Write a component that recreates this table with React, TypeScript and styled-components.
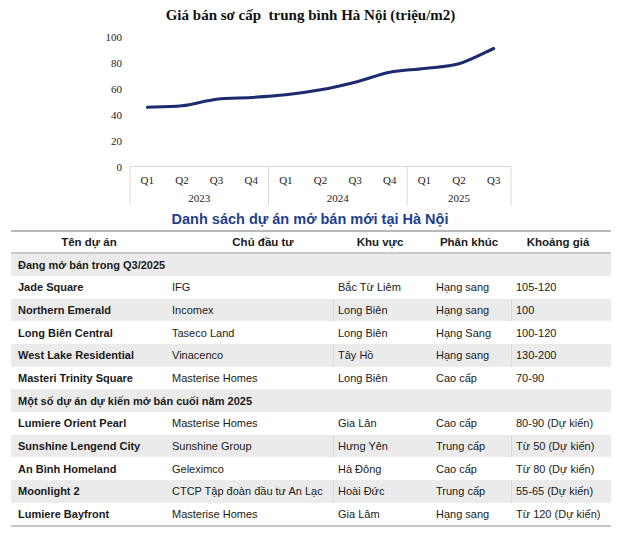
import React from 'react'
import styled, { createGlobalStyle } from 'styled-components'

interface Project {
  name: string
  investor: string
  area: string
  segment: string
  price: string
}

type Row = { kind: 'section'; title: string } | { kind: 'project'; data: Project }

const rows: Row[] = [
  { kind: 'section', title: 'Đang mở bán trong Q3/2025' },
  { kind: 'project', data: { name: 'Jade Square', investor: 'IFG', area: 'Bắc Từ Liêm', segment: 'Hạng sang', price: '105-120' } },
  { kind: 'project', data: { name: 'Northern Emerald', investor: 'Incomex', area: 'Long Biên', segment: 'Hạng sang', price: '100' } },
  { kind: 'project', data: { name: 'Long Biên Central', investor: 'Taseco Land', area: 'Long Biên', segment: 'Hạng Sang', price: '100-120' } },
  { kind: 'project', data: { name: 'West Lake Residential', investor: 'Vinacenco', area: 'Tây Hồ', segment: 'Hạng sang', price: '130-200' } },
  { kind: 'project', data: { name: 'Masteri Trinity Square', investor: 'Masterise Homes', area: 'Long Biên', segment: 'Cao cấp', price: '70-90' } },
  { kind: 'section', title: 'Một số dự án dự kiến mở bán cuối năm 2025' },
  { kind: 'project', data: { name: 'Lumiere Orient Pearl', investor: 'Masterise Homes', area: 'Gia Lân', segment: 'Cao cấp', price: '80-90 (Dự kiến)' } },
  { kind: 'project', data: { name: 'Sunshine Lengend City', investor: 'Sunshine Group', area: 'Hưng Yên', segment: 'Trung cấp', price: 'Từ 50 (Dự kiến)' } },
  { kind: 'project', data: { name: 'An Bình Homeland', investor: 'Geleximco', area: 'Hà Đông', segment: 'Cao cấp', price: 'Từ 80 (Dự kiến)' } },
  { kind: 'project', data: { name: 'Moonlight 2', investor: 'CTCP Tập đoàn đầu tư An Lạc', area: 'Hoài Đức', segment: 'Trung cấp', price: '55-65 (Dự kiến)' } },
  { kind: 'project', data: { name: 'Lumiere Bayfront', investor: 'Masterise Homes', area: 'Gia Lâm', segment: 'Hạng sang', price: 'Từ 120 (Dự kiến)' } },
]

// giá trung bình theo quý, Q1/2023 -> Q3/2025
const prices = [45.7, 46.8, 51.9, 53.2, 55.3, 59.1, 65.0, 72.7, 75.6, 79.2, 91.0]
const years = [
  { label: '2023', count: 4 },
  { label: '2024', count: 4 },
  { label: '2025', count: 3 },
]

const PLOT_LEFT = 130
const PLOT_RIGHT = 511
const BASE_Y = 166.5
const UNIT = 1.297
const STEP = (PLOT_RIGHT - PLOT_LEFT) / prices.length

const px = (i: number) => PLOT_LEFT + STEP * (i + 0.5)
const py = (v: number) => BASE_Y - v * UNIT

const smoothPath = (pts: [number, number][]) => {
  let d = `M${pts[0][0]},${pts[0][1]}`
  for (let i = 0; i < pts.length - 1; i++) {
    const p0 = pts[i - 1] || pts[i]
    const p1 = pts[i]
    const p2 = pts[i + 1]
    const p3 = pts[i + 2] || p2
    const t = 6
    const c1x = p1[0] + (p2[0] - p0[0]) / t
    const c1y = p1[1] + (p2[1] - p0[1]) / t
    const c2x = p2[0] - (p3[0] - p1[0]) / t
    const c2y = p2[1] - (p3[1] - p1[1]) / t
    d += ` C${c1x.toFixed(1)},${c1y.toFixed(1)} ${c2x.toFixed(1)},${c2y.toFixed(1)} ${p2[0].toFixed(1)},${p2[1].toFixed(1)}`
  }
  return d
}

const PriceChart: React.FC = () => {
  const pts = prices.map((v, i) => [px(i), py(v)] as [number, number])
  let start = 0
  const groupLines = [PLOT_LEFT]
  return (
    <ChartSvg width={629} height={182} viewBox="0 26 629 182">
      {[0, 20, 40, 60, 80, 100].map(v => (
        <AxisText key={v} x={122} y={py(v) + 4} textAnchor="end">
          {v}
        </AxisText>
      ))}
      <line x1={PLOT_LEFT} y1={BASE_Y} x2={PLOT_RIGHT} y2={BASE_Y} stroke="#d9d9d9" strokeWidth={1} />
      {years.map(y => {
        const from = start
        start += y.count
        groupLines.push(PLOT_LEFT + STEP * start)
        return (
          <AxisText key={y.label} x={PLOT_LEFT + STEP * (from + y.count / 2)} y={201.5} textAnchor="middle">
            {y.label}
          </AxisText>
        )
      })}
      {groupLines.map(x => (
        <line key={x} x1={x} y1={BASE_Y} x2={x} y2={206} stroke="#d9d9d9" strokeWidth={1} />
      ))}
      {prices.map((_, i) => (
        <AxisText key={i} x={px(i)} y={183.5} textAnchor="middle">
          {`Q${(i % 4) + 1}`}
        </AxisText>
      ))}
      <path d={smoothPath(pts)} fill="none" stroke="#1c2b6e" strokeWidth={3} strokeLinecap="round" />
    </ChartSvg>
  )
}

const App: React.FC = () => {
  let shade = false
  return (
    <Page>
      <GlobalStyle />
      <ChartTitle>{'Giá bán sơ cấp  trung bình Hà Nội (triệu/m2)'}</ChartTitle>
      <PriceChart />
      <TableTitle>Danh sách dự án mở bán mới tại Hà Nội</TableTitle>
      <Table>
        <HeaderRow>
          <HeadCell>Tên dự án</HeadCell>
          <HeadCell $shift={26}>Chủ đầu tư</HeadCell>
          <HeadCell>Khu vực</HeadCell>
          <HeadCell>Phân khúc</HeadCell>
          <HeadCell $shift={-6}>Khoảng giá</HeadCell>
        </HeaderRow>
        {rows.map((row, i) => {
          shade = !shade
          if (row.kind === 'section') {
            return (
              <SectionRow key={i} $shade={shade}>
                {row.title}
              </SectionRow>
            )
          }
          const p = row.data
          return (
            <DataRow key={i} $shade={shade}>
              <NameCell>{p.name}</NameCell>
              <Cell>{p.investor}</Cell>
              <Cell $divider={shade}>{p.area}</Cell>
              <Cell $pad={8}>{p.segment}</Cell>
              <Cell $divider={shade}>{p.price}</Cell>
            </DataRow>
          )
        })}
      </Table>
    </Page>
  )
}

export default App

const GlobalStyle = createGlobalStyle`
  body {
    margin: 0;
    background: #ffffff;
  }
`

const Page = styled.div`
  width: 629px;
  height: 540px;
  background: #ffffff;
  display: flex;
  flex-direction: column;
  overflow: hidden;
`

const ChartTitle = styled.div`
  font-family: 'Liberation Serif', 'Times New Roman', serif;
  font-weight: bold;
  font-size: 15px;
  color: #111111;
  text-align: center;
  white-space: pre;
  padding: 7px 8px 0 0;
  height: 19px;
  line-height: 16px;
`

const ChartSvg = styled.svg`
  display: block;
`

const AxisText = styled.text`
  font-family: 'Liberation Serif', 'Times New Roman', serif;
  font-size: 11px;
  fill: #222222;
`

const TableTitle = styled.div`
  font-family: 'Liberation Sans', Arial, sans-serif;
  font-weight: bold;
  font-size: 14.5px;
  color: #23408e;
  text-align: center;
  line-height: 18px;
  height: 22px;
  padding: 2px 9px 0 0;
  box-sizing: border-box;
`

const Table = styled.div`
  margin-left: 11px;
  width: 600px;
  border-top: 2px solid #b8b8b8;
  border-bottom: 2px solid #c4c4c4;
  font-family: 'Liberation Sans', Arial, sans-serif;
  font-size: 11px;
  color: #1a1a1a;
`

const columns = '156px 166px 94px 84px 100px'

const HeaderRow = styled.div`
  display: grid;
  grid-template-columns: ${columns};
  height: 19.5px;
  align-items: center;
  border-bottom: 2px solid #c8c8c8;
  background: #ffffff;
`

const HeadCell = styled.div<{ $shift?: number }>`
  font-weight: bold;
  font-size: 11.5px;
  text-align: center;
  padding-left: ${p => Math.max(p.$shift || 0, 0)}px;
  padding-right: ${p => Math.max(-(p.$shift || 0), 0)}px;
`

const SectionRow = styled.div<{ $shade: boolean }>`
  height: 22.65px;
  display: flex;
  align-items: center;
  padding-left: 7px;
  font-weight: bold;
  background: ${p => (p.$shade ? '#ebebeb' : '#ffffff')};
`

const DataRow = styled.div<{ $shade: boolean }>`
  display: grid;
  grid-template-columns: ${columns};
  height: 22.65px;
  align-items: stretch;
  background: ${p => (p.$shade ? '#ebebeb' : '#ffffff')};
`

const Cell = styled.div<{ $divider?: boolean; $pad?: number }>`
  display: flex;
  align-items: center;
  white-space: nowrap;
  padding-left: ${p => p.$pad ?? 4}px;
  border-left: 1px solid ${p => (p.$divider ? '#dadada' : 'transparent')};
`

const NameCell = styled(Cell)`
  font-weight: bold;
  padding-left: 7px;
  border-left: none;
`
